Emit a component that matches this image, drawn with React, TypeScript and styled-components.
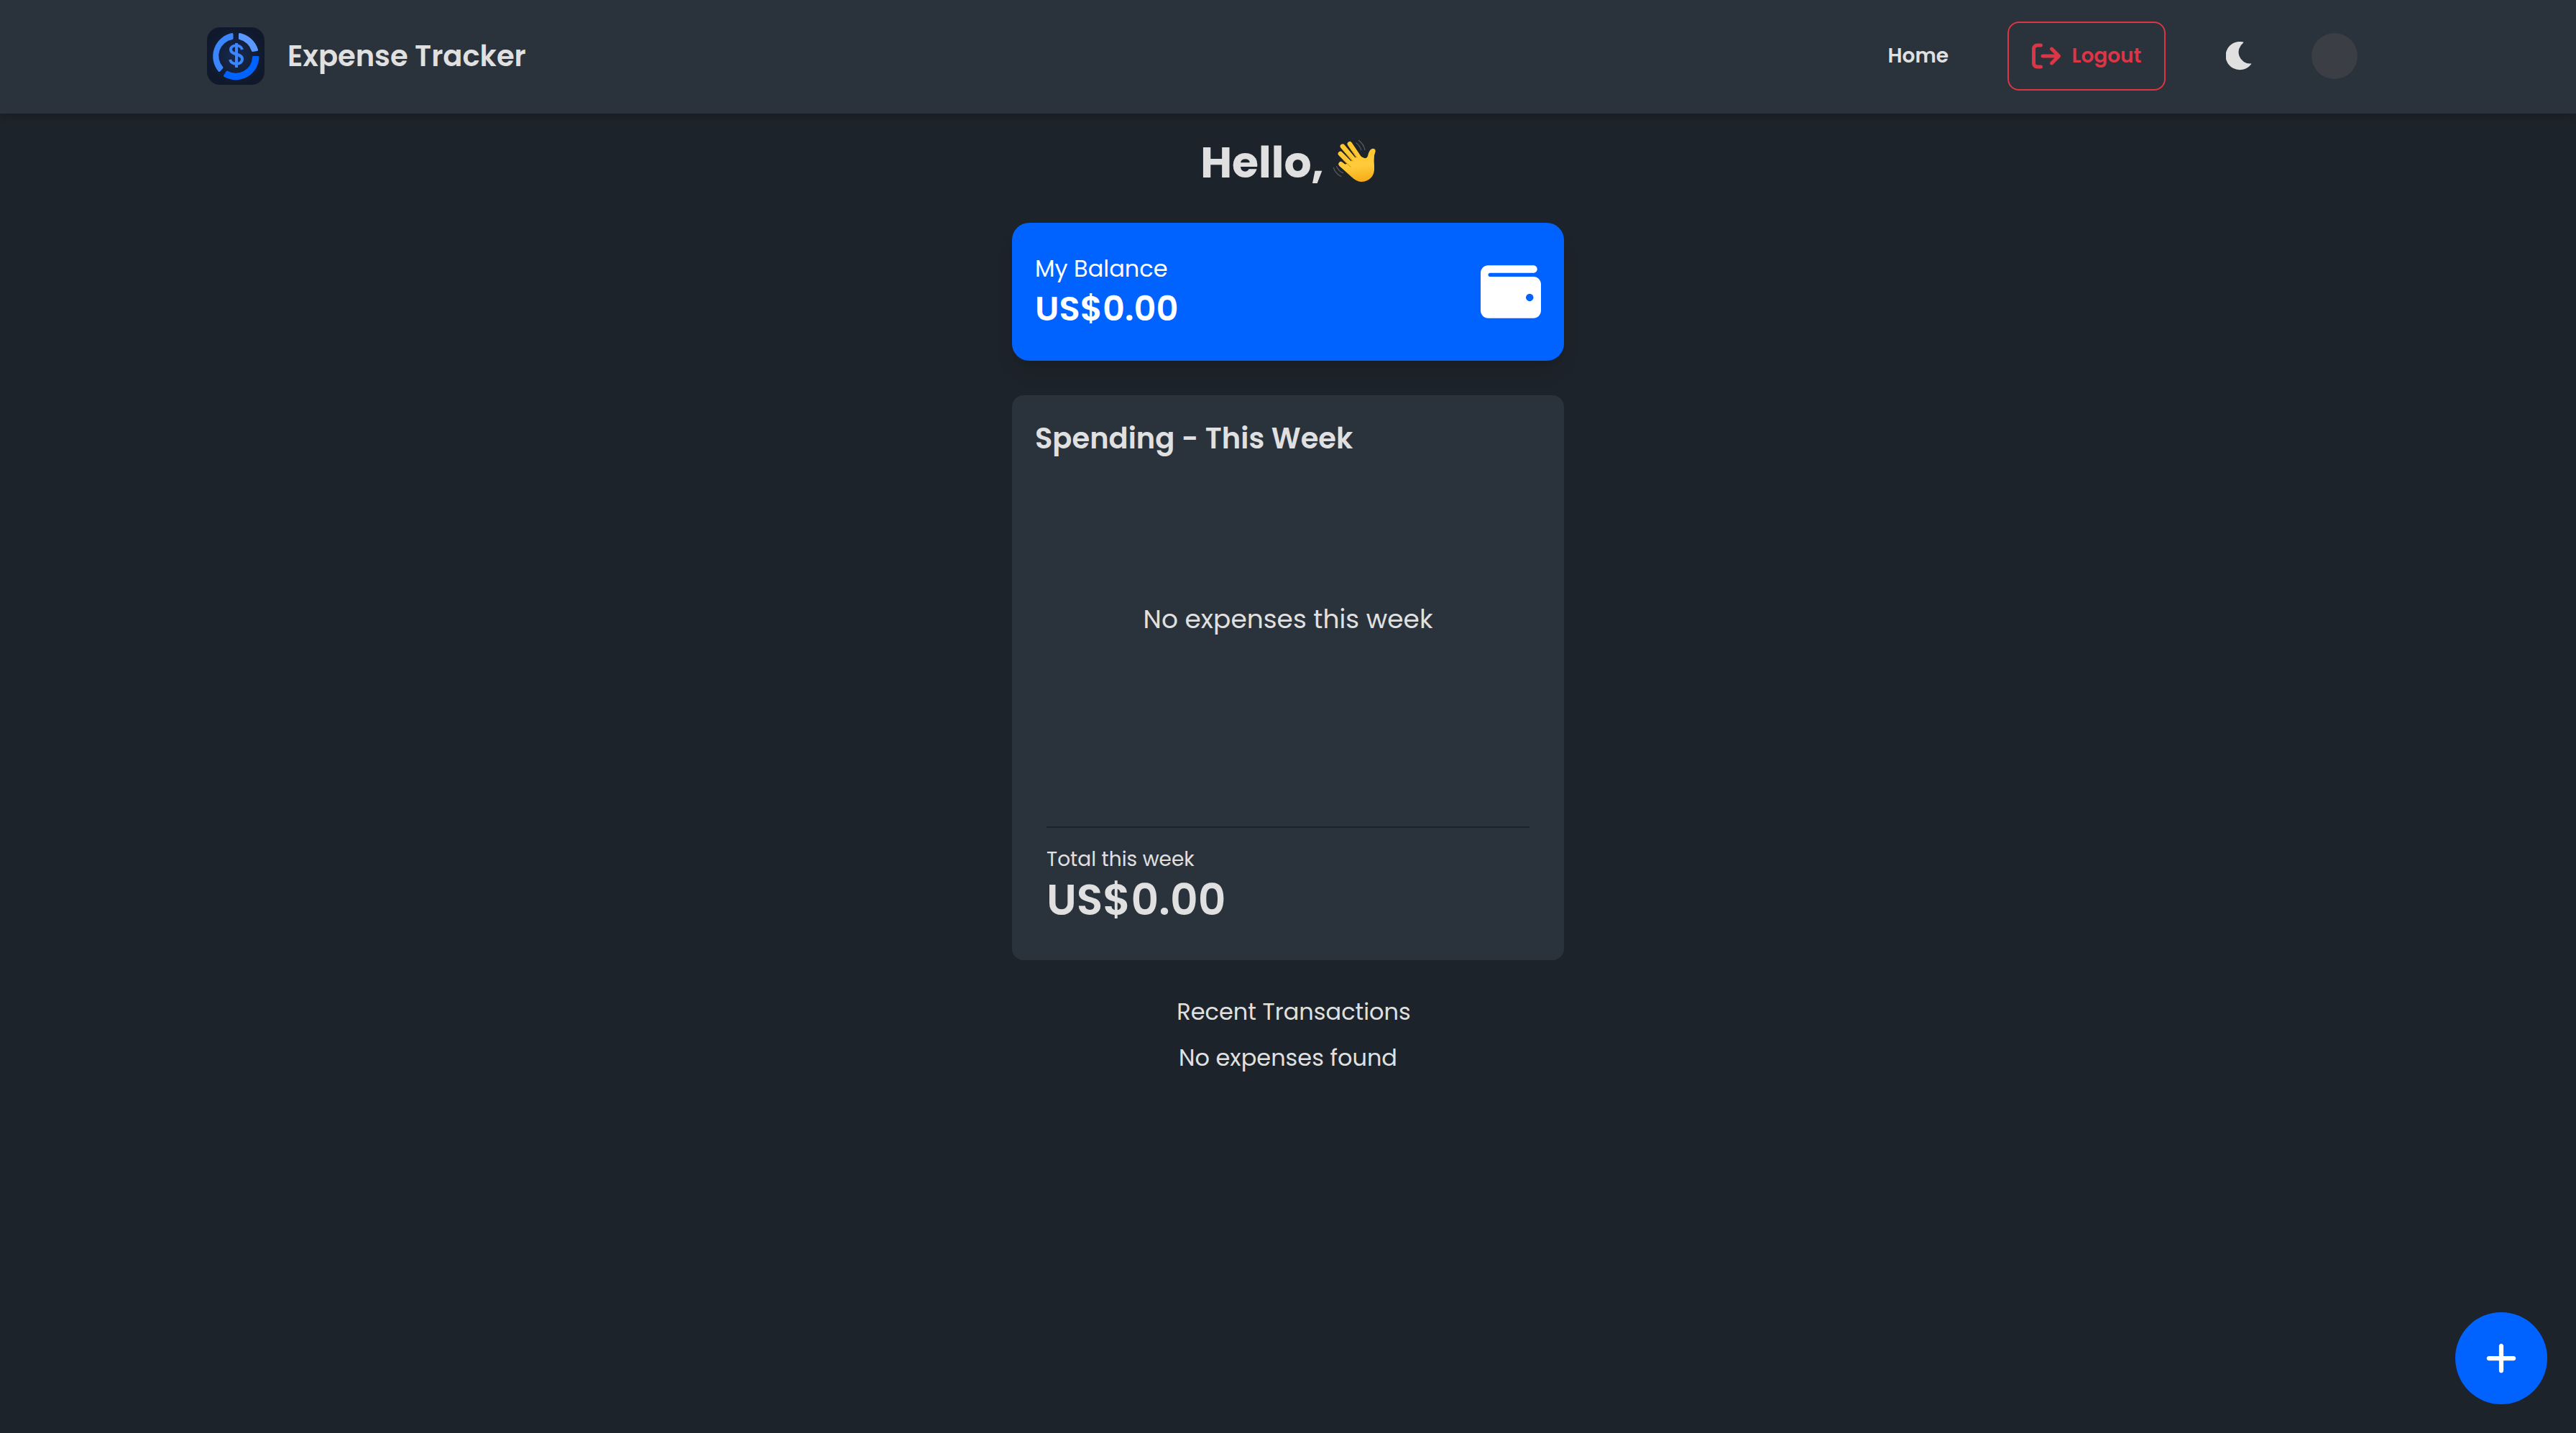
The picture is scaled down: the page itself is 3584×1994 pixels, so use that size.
import React from "react";
import styled, { createGlobalStyle } from "styled-components";
import { FaWallet, FaArrowRightFromBracket, FaPlus } from "react-icons/fa6";

const GlobalStyle = createGlobalStyle`
  *, *::before, *::after { box-sizing: border-box; }
  body {
    margin: 0;
    background: #1d232a;
    color: #e0e0e0;
    font-family: Poppins, Inter, "Noto Sans", sans-serif;
    font-size: 32px;
    line-height: 48px;
  }
  h1, h2, p { margin: 0; }
`;

const Header = styled.header`
  display: flex;
  align-items: center;
  justify-content: space-between;
  padding: 30px 304px 32px 288px;
  background: #2a323c;
  box-shadow: 0 8px 12px -2px rgba(0, 0, 0, 0.1), 0 4px 8px -4px rgba(0, 0, 0, 0.1);
`;

const Brand = styled.a`
  display: flex;
  align-items: center;
  gap: 32px;
  color: inherit;
  text-decoration: none;
  font-size: 40px;
  line-height: 56px;
  font-weight: 600;
`;

const Nav = styled.nav`
  display: flex;
  align-items: center;
`;

const HomeLink = styled.a`
  margin-right: 82px;
  color: inherit;
  text-decoration: none;
  font-size: 28px;
  line-height: 40px;
  font-weight: 600;
`;

const LogoutButton = styled.button`
  display: flex;
  align-items: center;
  justify-content: center;
  gap: 16px;
  width: 220px;
  height: 96px;
  border: 2px solid #dc3545;
  border-radius: 16px;
  background: transparent;
  color: #dc3545;
  font: inherit;
  font-size: 28px;
  font-weight: 600;
`;

const ThemeButton = styled.button`
  display: flex;
  margin: 0 83px 0 84px;
  padding: 0;
  border: 0;
  background: transparent;
  color: inherit;
`;

const Avatar = styled.div`
  width: 64px;
  height: 64px;
  border-radius: 50%;
  background: #3b3e44;
`;

const Main = styled.main`
  display: flex;
  flex-direction: column;
  width: 768px;
  margin: 0 auto;
  padding-top: 32px;
`;

const Greeting = styled.h1`
  display: flex;
  align-items: center;
  justify-content: center;
  gap: 12px;
  font-size: 60px;
  line-height: 72px;
  font-weight: 700;
`;

const Balance = styled.section`
  display: flex;
  align-items: center;
  justify-content: space-between;
  height: 192px;
  margin-top: 48px;
  padding: 0 32px;
  border-radius: 24px;
  background: #0062ff;
  color: #fff;
  box-shadow: 0 20px 30px -6px rgba(0, 0, 0, 0.1), 0 8px 12px -8px rgba(0, 0, 0, 0.1);
`;

const Amount = styled.p<{ $large?: boolean }>`
  font-size: ${(p) => (p.$large ? 60 : 48)}px;
  line-height: ${(p) => (p.$large ? 72 : 64)}px;
  font-weight: 600;
`;

const Spending = styled.section`
  display: flex;
  flex-direction: column;
  margin-top: 48px;
  padding: 32px;
  border-radius: 16px;
  background: #2a323c;
`;

const CardTitle = styled.h2`
  font-size: 40px;
  line-height: 56px;
  font-weight: 600;
`;

const EmptyChart = styled.p`
  display: grid;
  place-items: center;
  height: 448px;
  font-size: 36px;
`;

const Total = styled.div`
  margin: 64px 16px 0;
  padding: 24px 0 16px;
  border-top: 2px solid #1d232a;
  font-size: 28px;
  line-height: 40px;
`;

const Recent = styled.section`
  display: flex;
  flex-direction: column;
  gap: 16px;
  margin-top: 48px;
  text-align: center;
`;

const RecentTitle = styled.h2`
  padding-left: 16px;
  font-size: 32px;
  font-weight: 400;
`;

const AddButton = styled.button`
  position: fixed;
  right: 40px;
  bottom: 40px;
  display: grid;
  place-items: center;
  width: 128px;
  height: 128px;
  padding: 0;
  border: 0;
  border-radius: 50%;
  background: #0062ff;
  color: #fff;
`;

const Logo = () => (
  <svg width="80" height="80" viewBox="0 0 80 80" aria-hidden="true">
    <defs>
      <radialGradient id="logoGlow">
        <stop offset="0" stopColor="#182a50" />
        <stop offset="1" stopColor="#10192b" />
      </radialGradient>
    </defs>
    <rect width="80" height="80" rx="18" fill="url(#logoGlow)" />
    <g strokeWidth="3" strokeLinejoin="round">
      <path fill="#3b86ff" stroke="#3b86ff" d="M35 9.5v6A24.5 24.5 0 0 0 21 56l-4 4.5A31.5 31.5 0 0 1 35 9.5z" />
      <path fill="#5b98ff" stroke="#5b98ff" d="M45.5 9.5v6A24.5 24.5 0 0 1 63.5 32.5l6-1A31.5 31.5 0 0 0 45.5 9.5z" />
      <path fill="#0062ff" stroke="#0062ff" d="M64.5 41.5h6.5A31 31 0 0 1 24.5 67.5l3.5-5.5A24.5 24.5 0 0 0 64.5 41.5z" />
    </g>
    <path fill="none" stroke="#3b86ff" strokeWidth="4" d="M41 22v34M49 31c-2-8-16-7-16 0 0 8 16 5 16 13 0 9-15 9-17 1" />
  </svg>
);

const Moon = () => (
  <svg width="36" height="40" viewBox="0 0 36 40" fill="currentColor" aria-hidden="true">
    <path d="M24 .5a.8.8 0 0 1 0 1.2A16 16 0 0 0 34.5 30.5a.5.5 0 0 1 .6.8A19.7 19.7 0 1 1 24 .5z" />
  </svg>
);

const WaveHand = () => (
  <svg width="60" height="64" viewBox="642 42 180 192" role="img" aria-label="Waving hand">
    <defs>
      <linearGradient id="skin" gradientUnits="userSpaceOnUse" x1="740" y1="50" x2="760" y2="220">
        <stop offset="0" stopColor="#ffc629" />
        <stop offset="0.6" stopColor="#ffcb3c" />
        <stop offset="1" stopColor="#f6ab14" />
      </linearGradient>
    </defs>
    <g fill="none" stroke="#55565a" strokeWidth="4" strokeLinecap="round">
      <path d="M751 46q20 14 26 39M741 57q15 10 20 29M646 160q9 27 32 36M659 155q8 19 27 27" />
    </g>
    <g fill="none" stroke="url(#skin)" strokeWidth="20" strokeLinecap="round" strokeLinejoin="round">
      <path d="M714 61L762 132M684 71L742 140M675 102L730 158M677 145L722 180" />
    </g>
    <path
      fill="url(#skin)"
      d="M670 152L718 196Q742 219 762 219Q790 218 806 198Q818 182 816 154Q814 130 816 109L821 92Q822 81 812 80Q803 79 798 88Q792 97 789 111Q787 120 779 121Q770 120 764 115L747 110L710 142z"
    />
    <g fill="none" stroke="#d98e0a" strokeWidth="3" strokeLinecap="round">
      <path d="M723 90L744 118M692 95L727 132M687 128L718 157" />
    </g>
  </svg>
);

export default function App() {
  return (
    <>
      <GlobalStyle />
      <Header>
        <Brand href="#">
          <Logo />
          Expense Tracker
        </Brand>
        <Nav>
          <HomeLink href="#">Home</HomeLink>
          <LogoutButton type="button">
            <FaArrowRightFromBracket size={40} />
            Logout
          </LogoutButton>
          <ThemeButton type="button" aria-label="Toggle theme">
            <Moon />
          </ThemeButton>
          <Avatar />
        </Nav>
      </Header>
      <Main>
        <Greeting>
          Hello, <WaveHand />
        </Greeting>
        <Balance>
          <div>
            <p>My Balance</p>
            <Amount>US$0.00</Amount>
          </div>
          <FaWallet size={84} />
        </Balance>
        <Spending>
          <CardTitle>Spending - This Week</CardTitle>
          <EmptyChart>No expenses this week</EmptyChart>
          <Total>
            <p>Total this week</p>
            <Amount $large>US$0.00</Amount>
          </Total>
        </Spending>
        <Recent>
          <RecentTitle>Recent Transactions</RecentTitle>
          <p>No expenses found</p>
        </Recent>
      </Main>
      <AddButton type="button" aria-label="Add expense">
        <FaPlus size={50} />
      </AddButton>
    </>
  );
}
